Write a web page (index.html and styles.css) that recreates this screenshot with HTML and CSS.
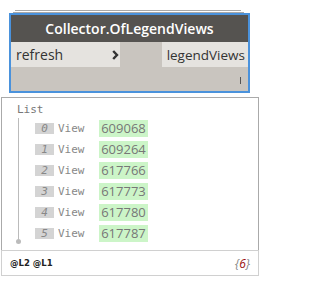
FILE: index.html
```html
<!DOCTYPE html>
<html>
<head>
<meta charset="utf-8">
<link rel="stylesheet" href="styles.css">
</head>
<body>
<div class="canvas">
  <div class="stack stack-a"></div>
  <div class="stack stack-b"></div>
  <div class="node">
    <div class="node-header">Collector.OfLegendViews</div>
    <div class="node-ports">
      <div class="port-in"><span>refresh</span>
        <svg class="chev" width="7" height="10" viewBox="0 0 7 10"><path d="M1.2 1 L5 5 L1.2 9" fill="none" stroke="#333" stroke-width="2.4"/></svg>
      </div>
      <div class="port-out">legendViews</div>
    </div>
    <div class="node-foot"><span class="grip"></span></div>
  </div>
  <div class="preview">
    <div class="preview-main">
      <div class="list-title">List</div>
      <div class="tree">
        <div class="tree-line"><span class="tree-dot"></span></div>
        <div class="rows">
          <div class="row"><span class="idx">0</span><span class="type">View</span><span class="val">609068</span></div>
          <div class="row"><span class="idx">1</span><span class="type">View</span><span class="val">609264</span></div>
          <div class="row"><span class="idx">2</span><span class="type">View</span><span class="val">617766</span></div>
          <div class="row"><span class="idx">3</span><span class="type">View</span><span class="val">617773</span></div>
          <div class="row"><span class="idx">4</span><span class="type">View</span><span class="val">617780</span></div>
          <div class="row"><span class="idx">5</span><span class="type">View</span><span class="val">617787</span></div>
        </div>
      </div>
    </div>
    <div class="preview-foot">
      <span class="levels">@L2 @L1</span>
      <span class="count">{<b>6</b>}</span>
    </div>
  </div>
</div>
</body>
</html>
```

FILE: styles.css
```css
html, body {
  margin: 0;
  padding: 0;
  background: #ffffff;
}
.canvas {
  padding-top: 10px;
  font-family: "Open Sans", "Noto Sans", sans-serif;
}
.stack {
  height: 1px;
  background: #a8a8a8;
}
.stack-a {
  margin-left: 15px;
  width: 226px;
  margin-bottom: 1px;
}
.stack-b {
  margin-left: 13px;
  width: 231px;
}
.node {
  margin-left: 9px;
  width: 237px;
  border: 2px solid #4a92dc;
  background: #c9c5bf;
}
.node-header {
  height: 27px;
  background: #555350;
  color: #ffffff;
  font-weight: 600;
  font-size: 14px;
  display: flex;
  align-items: center;
  justify-content: center;
}
.node-ports {
  height: 25px;
  display: flex;
  justify-content: space-between;
}
.port-in {
  width: 109px;
  background: #e5e3df;
  display: flex;
  align-items: center;
  justify-content: space-between;
  padding-left: 5px;
  padding-right: 1px;
  box-sizing: border-box;
  font-size: 14px;
  color: #333333;
}
.port-out {
  width: 86px;
  background: #e5e3df;
  display: flex;
  align-items: center;
  justify-content: flex-end;
  padding-right: 3px;
  box-sizing: border-box;
  font-size: 13.5px;
  color: #333333;
}
.node-foot {
  height: 24px;
  display: flex;
  justify-content: flex-end;
  align-items: center;
  padding-right: 7px;
}
.grip {
  width: 1px;
  height: 7px;
  background: #555555;
  margin-top: 2px;
}
.preview {
  margin-top: 4px;
  margin-left: 1px;
  width: 258px;
}
.preview-main {
  height: 153px;
  border: 1px solid #aaaaaa;
  border-bottom: none;
  padding: 5px 0 0 15px;
  box-sizing: border-box;
  font-family: "DejaVu Sans Mono", "Liberation Mono", monospace;
  font-size: 11px;
}
.list-title {
  color: #777777;
  height: 13px;
  line-height: 13px;
}
.tree {
  display: flex;
  margin-top: 2px;
}
.tree-line {
  width: 1px;
  height: 124px;
  background: #bbbbbb;
  position: relative;
  margin-left: 1px;
}
.tree-dot {
  position: absolute;
  left: -2px;
  bottom: -2px;
  width: 5px;
  height: 5px;
  border-radius: 50%;
  background: #bbbbbb;
}
.rows {
  display: flex;
  flex-direction: column;
  gap: 4px;
  padding-top: 2px;
  margin-left: 16px;
}
.row {
  display: flex;
  align-items: center;
  height: 17px;
}
.idx {
  width: 19px;
  height: 11px;
  line-height: 11px;
  background: #d4d4d4;
  color: #888888;
  font-style: italic;
  font-size: 11px;
  text-align: center;
}
.type {
  margin-left: 4px;
  width: 41px;
  color: #888888;
  font-size: 11px;
}
.val {
  width: 49px;
  height: 17px;
  line-height: 17px;
  background: #ccf5c8;
  color: #777777;
  font-family: "Open Sans", "Noto Sans", sans-serif;
  font-size: 13px;
  text-align: center;
}
.preview-foot {
  height: 26px;
  border: 1px solid #d0d0d0;
  box-sizing: border-box;
  display: flex;
  justify-content: space-between;
  align-items: center;
  padding: 0 8px;
}
.levels {
  font-family: "DejaVu Sans", sans-serif;
  font-size: 8.5px;
  font-weight: bold;
  color: #222222;
}
.count {
  font-family: "Open Sans", sans-serif;
  font-style: italic;
  font-size: 12px;
  color: #888888;
}
.count b {
  font-weight: normal;
  color: #9b1111;
}
```
